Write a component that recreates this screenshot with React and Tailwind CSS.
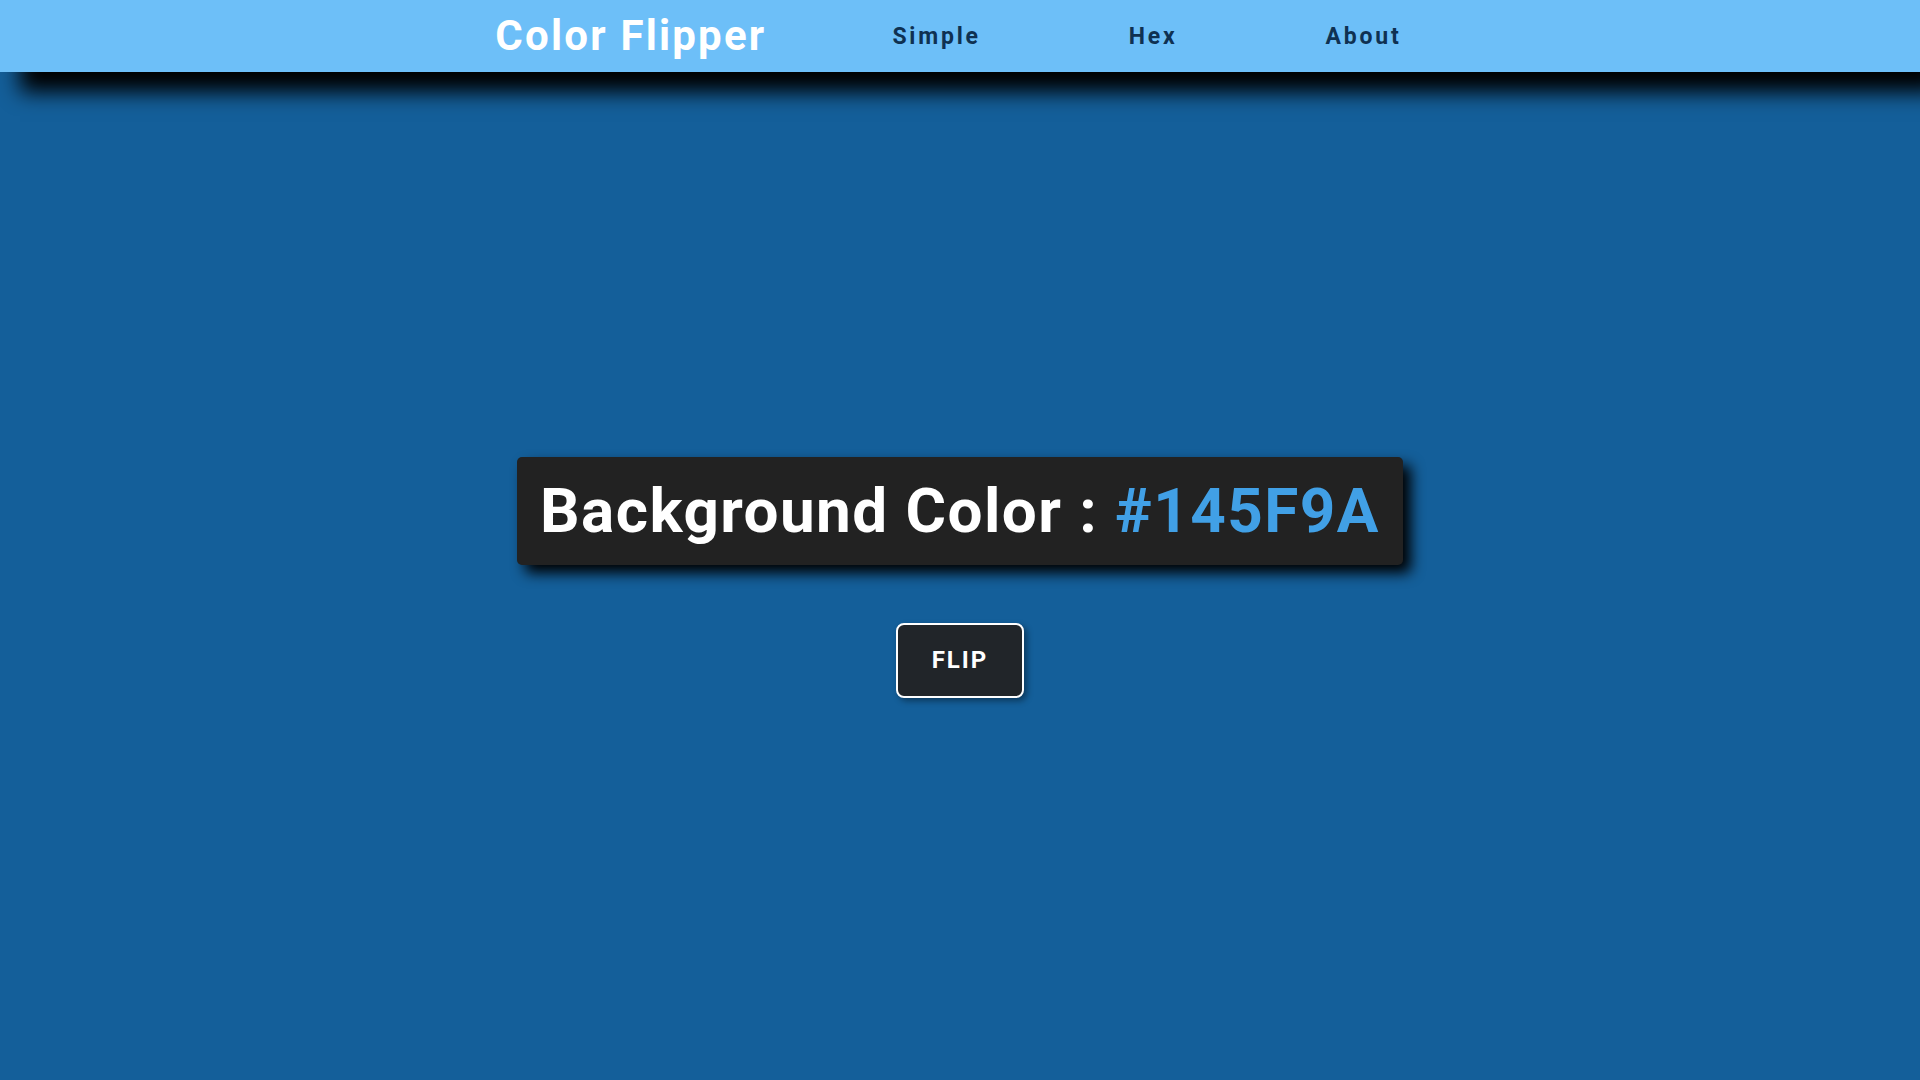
import React, { useState } from 'react';

const App = () => {
    const [color, setColor] = useState('#145F9A');

    const flip = () => {
        const hex = '0123456789ABCDEF';
        let c = '#';
        for (let i = 0; i < 6; i++) c += hex[Math.floor(Math.random() * 16)];
        setColor(c);
    };

    return (
        <div className="min-h-screen flex flex-col font-['Roboto',sans-serif]" style={{ backgroundColor: color }}>
            {/* Navbar */}
            <nav className="h-[72px] bg-[#6dbff8] flex items-center justify-center pr-[23px] shadow-[20px_20px_20px_#000] relative z-10">
                <h1 className="text-[42px] font-bold text-white tracking-[2.2px] leading-none mr-[126px]">Color Flipper</h1>
                <ul className="flex items-center gap-[148px] mt-[2px]">
                    <li><a href="#" className="text-[23px] font-bold text-[#0f3152] tracking-[2.8px]">Simple</a></li>
                    <li><a href="#" className="text-[23px] font-bold text-[#0f3152] tracking-[2.8px]">Hex</a></li>
                    <li><a href="#" className="text-[23px] font-bold text-[#0f3152] tracking-[2.8px]">About</a></li>
                </ul>
            </nav>

            {/* Main */}
            <main className="flex-1 flex flex-col items-center justify-center pt-[2px]">
                <div className="bg-[#222222] rounded-[5px] px-[23px] h-[108px] flex items-center shadow-[8px_8px_14px_#000]">
                    <h2 className="text-[62px] font-bold text-white tracking-[1.45px] leading-none">
                        Background Color : <span className="text-[#41a0e6]">{color}</span>
                    </h2>
                </div>
                <button
                    onClick={flip}
                    className="mt-[58px] w-[128px] h-[75px] bg-[#212529] border-2 border-white rounded-[8px] text-white text-[24px] font-bold tracking-[2px] shadow-[3px_3px_6px_rgba(0,0,0,0.4)]"
                >
                    FLIP
                </button>
            </main>
        </div>
    );
};

export default App;
